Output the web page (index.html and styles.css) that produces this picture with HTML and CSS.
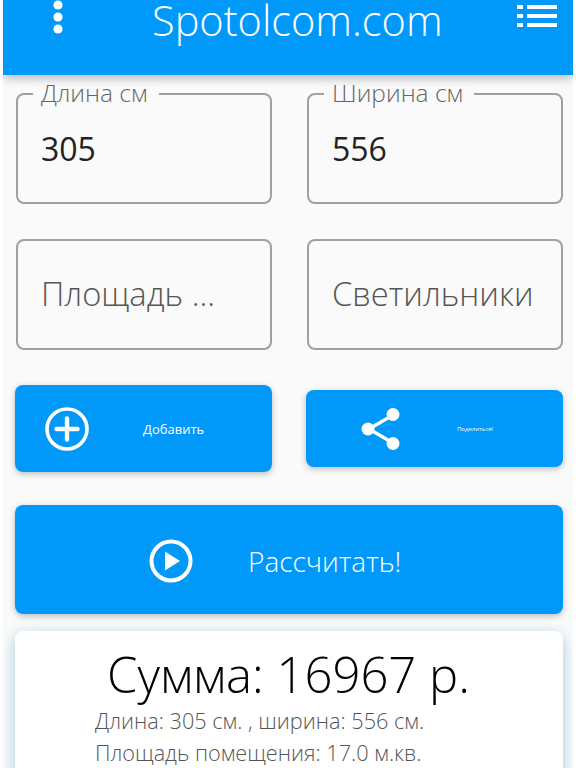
FILE: index.html
```html
<!DOCTYPE html>
<html lang="ru">
<head>
<meta charset="utf-8">
<title>Spotolcom.com</title>
<link rel="stylesheet" href="styles.css">
</head>
<body>
<div class="screen">
  <header class="appbar">
    <svg class="dots" width="18" height="36" viewBox="0 0 18 36" fill="#fff"><circle cx="9" cy="5" r="4.6"/><circle cx="9" cy="17" r="4.6"/><circle cx="9" cy="29" r="4.6"/></svg>
    <h1 class="title">Spotolcom.com</h1>
    <svg class="list" width="40" height="24" viewBox="0 0 40 24" fill="#fff"><rect x="0" y="1" width="6" height="4"/><rect x="10" y="1" width="30" height="4"/><rect x="0" y="10" width="6" height="4"/><rect x="10" y="10" width="30" height="4"/><rect x="0" y="19" width="6" height="4"/><rect x="10" y="19" width="30" height="4"/></svg>
  </header>
  <main class="content">
    <div class="fields">
      <div class="field"><span class="legend">Длина см</span><span class="value">305</span></div>
      <div class="field"><span class="legend">Ширина см</span><span class="value">556</span></div>
      <div class="field"><span class="placeholder">Площадь ...</span></div>
      <div class="field"><span class="placeholder">Светильники</span></div>
    </div>
    <div class="actions">
      <button class="btn btn-add">
        <svg width="46" height="46" viewBox="0 0 46 46" fill="none" stroke="#fff"><circle cx="23" cy="23" r="20" stroke-width="3.6"/><path d="M23 12.5v21M12.5 23h21" stroke-width="4.4" stroke-linecap="round"/></svg>
        <span>Добавить</span>
      </button>
      <button class="btn btn-share">
        <svg width="42" height="46" viewBox="0 0 42 46" fill="#fff" stroke="#fff"><path d="M33 9 9 23l24 14" fill="none" stroke-width="3.4"/><circle cx="33" cy="8.500" r="6.500" stroke="none"/><circle cx="8" cy="23" r="6.500" stroke="none"/><circle cx="33" cy="37.500" r="6.500" stroke="none"/></svg>
        <span>Поделиться!</span>
      </button>
    </div>
    <button class="btn btn-calc">
      <svg width="44" height="46" viewBox="0 0 44 46" fill="none"><circle cx="22" cy="23" r="19.500" stroke="#fff" stroke-width="4"/><path d="M16 13.500v19L31 23z" fill="#fff"/></svg>
      <span>Рассчитать!</span>
    </button>
    <section class="result">
      <div class="sum">Сумма: 16967 р.</div>
      <p class="line">Длина: 305 см. , ширина: 556 см.</p>
      <p class="line">Площадь помещения: 17.0 м.кв.</p>
    </section>
  </main>
</div>
</body>
</html>
```
FILE: styles.css
```css
* { box-sizing: border-box; }
html, body { margin: 0; height: 100%; overflow: hidden; }
body { background: #fff; font-family: "Open Sans", "Noto Sans", sans-serif; }
.screen { margin: 0 3px; height: 768px; background: #fafafa; overflow: hidden; }
.appbar {
  height: 75px; background: #0099fa; color: #fff;
  display: flex; align-items: flex-start;
  padding: 0 16px 0 46px;
  box-shadow: 0 3px 10px rgba(0,0,0,.28);
  position: relative;
}
.dots { flex: none; }
.title {
  margin: -1px 0 0 85px; flex: 1;
  font-size: 41.500px; font-weight: 300; line-height: 42px; white-space: nowrap;
}
.list { flex: none; margin-top: 4px; }
.content { padding: 18px 10px 0 12px; }
.fields {
  display: grid; grid-template-columns: 256px 256px; column-gap: 35px; row-gap: 35px;
  padding-left: 1px;
}
.field {
  position: relative; height: 111px;
  border: 2px solid #a0a0a0; border-radius: 8px;
  display: flex; align-items: center; padding: 0 0 0 23px;
}
.legend {
  position: absolute; left: 15px; top: -9px;
  padding: 0 11px 0 8px; background: #fafafa;
  font-size: 24.500px; line-height: 14px; font-weight: 300; color: #666; white-space: nowrap;
}
.value { font-size: 32px; color: #222; }
.placeholder { font-size: 32.700px; font-weight: 300; color: #555; white-space: nowrap; margin-top: -2px; }
.btn {
  border: 0; background: #0099fa; color: #fff; border-radius: 8px;
  font-family: inherit; display: flex; align-items: center; padding: 2px 0 0;
  box-shadow: 0 2px 6px rgba(0,0,0,.25);
}
.actions { display: flex; align-items: center; justify-content: space-between; margin-top: 34px; height: 88px; }
.btn-add { width: 257px; height: 87px; padding-left: 29px; gap: 53px; font-size: 13px; }
.btn-share { width: 257px; height: 77px; padding-left: 54px; gap: 55px; font-size: 6px; }
.btn-calc { width: 548px; height: 109px; margin-top: 33px; padding-left: 134px; gap: 55px; font-size: 28px; font-weight: 300; }
.result {
  margin-top: 17px; width: 548px; height: 200px; padding-top: 12px;
  background: #fff; border-radius: 8px;
  box-shadow: 0 4px 14px rgba(90,160,200,.55);
}
.sum { font-size: 49px; font-weight: 300; line-height: 62px; color: #000; text-align: center; padding-right: 1px; }
.line { margin: 0 0 0 80px; font-size: 21.700px; font-weight: 300; line-height: 32px; color: #555; white-space: nowrap; }
```
